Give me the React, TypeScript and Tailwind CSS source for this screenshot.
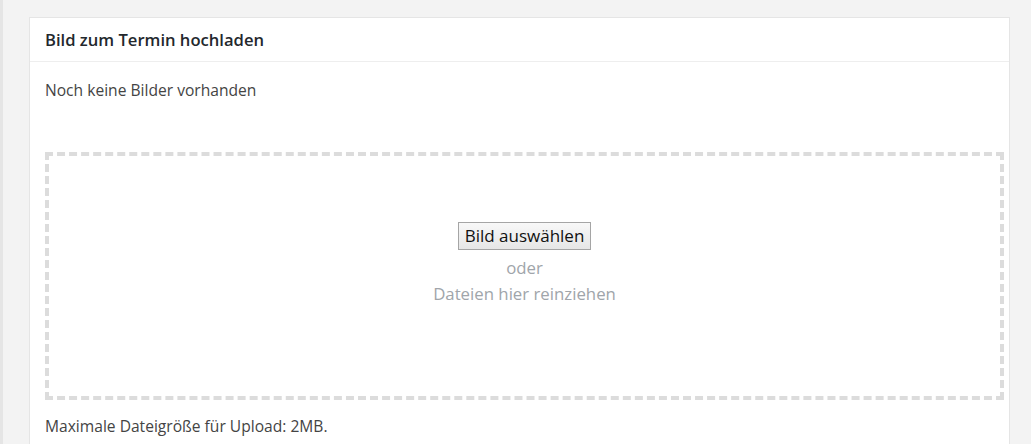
import React from "react";

export default function App() {
  return (
    <div
      className="flex w-[1031px] h-[444px] overflow-hidden bg-[#f3f3f3]"
      style={{ fontFamily: '"Open Sans", "Noto Sans", sans-serif' }}
    >
      <div className="w-[3px] shrink-0 bg-[#e5e5e5]" />
      <div className="pl-[26px] pt-[17px]">
        <div className="w-[981px] h-[500px] bg-white border border-[#e5e5e5]">
          <div className="h-[44px] flex items-center px-[15px] border-b border-[#eeeeee]">
            <h2 className="text-[16.6px] font-semibold text-[#23282d] leading-[22px] mt-[1px]">
              Bild zum Termin hochladen
            </h2>
          </div>
          <div className="px-[15px]">
            <p className="mt-[17px] text-[15.6px] leading-[22px] text-[#444]">
              Noch keine Bilder vorhanden
            </p>
            <div className="mt-[51px] h-[248px] w-[959px] border-4 border-dashed border-[#dcdcdc] flex flex-col items-center justify-center">
              <button className="mt-[-24px] h-[28px] px-[6px] border border-[#a5a5a5] bg-gradient-to-b from-[#f8f8f8] to-[#e6e6e6] text-[17px] leading-[20px] text-[#111]">
                Bild auswählen
              </button>
              <p className="mt-[5px] text-[16.8px] leading-[26px] text-[#a0a5aa]">oder</p>
              <p className="text-[16.8px] leading-[26px] text-[#a0a5aa]">Dateien hier reinziehen</p>
            </div>
            <p className="mt-[15px] text-[15.6px] leading-[22px] text-[#444]">
              Maximale Dateigröße für Upload: 2MB.
            </p>
          </div>
        </div>
      </div>
    </div>
  );
}
